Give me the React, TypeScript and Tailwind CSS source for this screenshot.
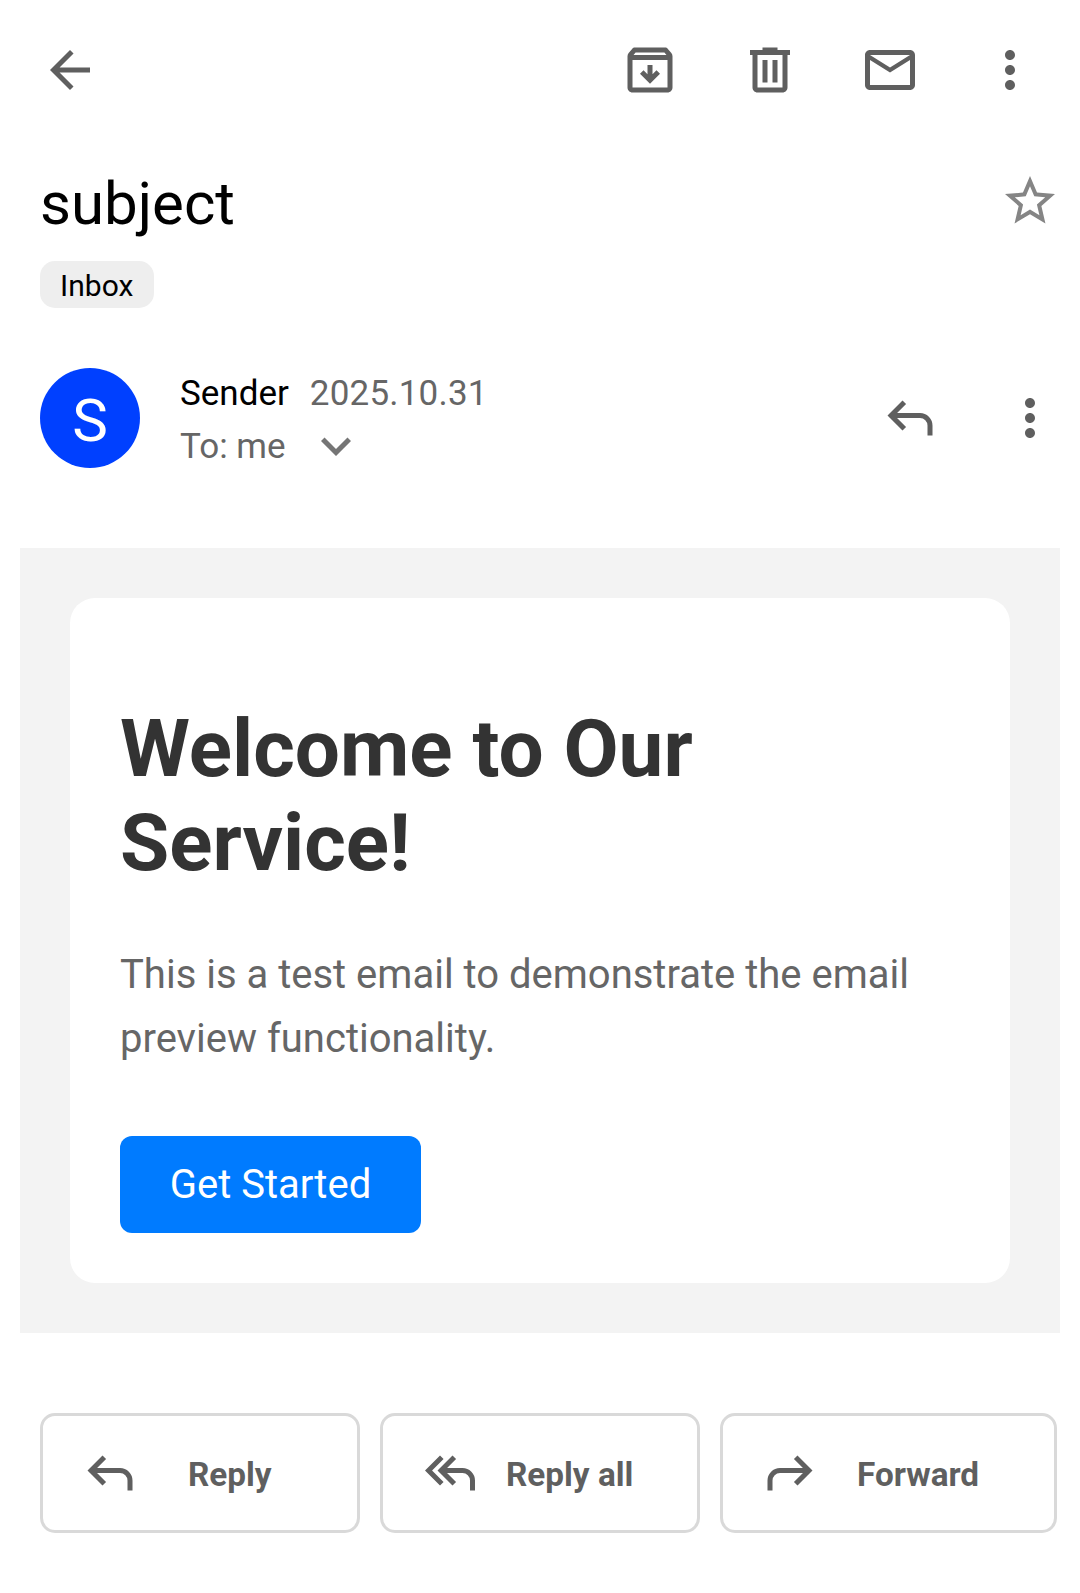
import type { ReactNode } from "react";

const paths = {
  back: "M20 11H7.83l5.59-5.59L12 4l-8 8 8 8 1.41-1.41L7.83 13H20v-2z",
  archive:
    "M20.54 5.23l-1.39-1.68C18.88 3.21 18.47 3 18 3H6c-.47 0-.88.21-1.16.55L3.46 5.23C3.17 5.57 3 6.02 3 6.5V19c0 1.1.9 2 2 2h14c1.1 0 2-.9 2-2V6.5c0-.48-.17-.93-.46-1.27zM6.24 5h11.52l.83 1H5.42l.82-1zM5 19V8h14v11H5zm11-5.5l-4 4-4-4 1.41-1.41L11 13.67V10h2v3.67l1.59-1.59L16 13.5z",
  trash:
    "M15 4V3H9v1H4v2h1v13c0 1.1.9 2 2 2h10c1.1 0 2-.9 2-2V6h1V4h-5zm2 15H7V6h10v13zM9 8h2v9H9zm4 0h2v9h-2z",
  mail: "M22 6c0-1.1-.9-2-2-2H4c-1.1 0-2 .9-2 2v12c0 1.1.9 2 2 2h16c1.1 0 2-.9 2-2V6zm-2 0l-8 5-8-5h16zm0 12H4V8l8 5 8-5v10z",
  more: "M12 8c1.1 0 2-.9 2-2s-.9-2-2-2-2 .9-2 2 .9 2 2 2zm0 2c-1.1 0-2 .9-2 2s.9 2 2 2 2-.9 2-2-.9-2-2-2zm0 6c-1.1 0-2 .9-2 2s.9 2 2 2 2-.9 2-2-.9-2-2-2z",
  star: "M22 9.24l-7.19-.62L12 2 9.19 8.63 2 9.24l5.46 4.73L5.82 21 12 17.27 18.18 21l-1.63-7.03L22 9.24zM12 15.4l-3.76 2.27 1-4.28-3.32-2.88 4.38-.38L12 6.1l1.71 4.04 4.38.38-3.32 2.88 1 4.28L12 15.4z",
  expand: "M16.59 8.59L12 13.17 7.41 8.59 6 10l6 6 6-6z",
  reply:
    "M19 19v-4q0-1.25-.875-2.125T16 12H6.825l3.6 3.6L9 17l-6-6 6-6 1.425 1.4-3.6 3.6H16q2.075 0 3.538 1.463T21 15v4z",
  replyAll:
    "M8 17L2 11l6-6 1.425 1.4L4.825 11l4.6 4.6zM20 19v-4q0-1.25-.875-2.125T17 12h-6.175l3.6 3.6L13 17l-6-6 6-6 1.425 1.4-3.6 3.6H17q2.075 0 3.538 1.463T22 15v4z",
  forward:
    "M5 19v-4q0-1.25.875-2.125T8 12h9.175l-3.6 3.6L15 17l6-6-6-6-1.425 1.4 3.6 3.6H8q-2.075 0-3.538 1.463T3 15v4z",
};

function Icon({ name, className = "" }: { name: keyof typeof paths; className?: string }) {
  return (
    <svg viewBox="0 0 24 24" className={`block size-[60px] shrink-0 fill-current ${className}`} aria-hidden="true">
      <path d={paths[name]} />
    </svg>
  );
}

function IconButton({ label, children }: { label: string; children: ReactNode }) {
  return (
    <button type="button" aria-label={label} className="shrink-0">
      {children}
    </button>
  );
}

function ActionButton({ icon, label, className }: { icon: keyof typeof paths; label: string; className: string }) {
  return (
    <button
      type="button"
      className={`flex h-[120px] items-center rounded-[15px] border-[3px] border-[#d9d9d9] pl-[37px] text-[33.3px] leading-[40px] font-bold ${className}`}
    >
      <Icon name={icon} />
      <span className="pt-[4px] whitespace-nowrap">{label}</span>
    </button>
  );
}

export default function App() {
  return (
    <div className="h-[1593px] w-[1080px] overflow-hidden bg-white font-['Roboto',sans-serif] text-[#5f5f5f]">
      <header className="flex h-[140px] items-center justify-between px-10">
        <IconButton label="Back">
          <Icon name="back" />
        </IconButton>
        <div className="flex gap-[60px]">
          <IconButton label="Archive">
            <Icon name="archive" />
          </IconButton>
          <IconButton label="Delete">
            <Icon name="trash" />
          </IconButton>
          <IconButton label="Mark unread">
            <Icon name="mail" />
          </IconButton>
          <IconButton label="More">
            <Icon name="more" />
          </IconButton>
        </div>
      </header>

      <section className="flex h-[168px] items-start justify-between pt-[29px] pr-5 pl-10">
        <div>
          <h1 className="text-[60px] leading-[70px] text-black">subject</h1>
          <span className="mt-[22px] flex h-[47px] w-[113.5px] items-center justify-center rounded-[15px] bg-[#eeeeee] pt-px text-[30px] leading-[35px] text-black">
            Inbox
          </span>
        </div>
        <div className="pt-[2px] text-[#858585]">
          <IconButton label="Star">
            <Icon name="star" />
          </IconButton>
        </div>
      </section>

      <section className="mt-[60px] flex h-[100px] items-center pr-5 pl-10">
        <div className="flex size-[100px] shrink-0 items-center justify-center rounded-full bg-[#0040ff] pt-[6px] text-[60px] leading-[70px] text-white">
          S
        </div>
        <div className="ml-10 flex-1 pt-[3px] text-[35px] leading-[41px] text-[#666666]">
          <div className="flex gap-[21px]">
            <span className="text-black">Sender</span>
            <span className="tracking-[0.2px]">2025.10.31</span>
          </div>
          <div className="mt-3 flex h-[41px] items-center gap-5">
            <span>To: me</span>
            <Icon name="expand" className="text-[#757575]" />
          </div>
        </div>
        <div className="flex gap-[60px]">
          <IconButton label="Reply to sender">
            <Icon name="reply" />
          </IconButton>
          <IconButton label="Message options">
            <Icon name="more" />
          </IconButton>
        </div>
      </section>

      <main className="mx-5 mt-20 h-[785px] bg-[#f3f3f3] p-[50px]">
        <article className="h-[685px] rounded-[25px] bg-white px-[50px] pt-[104px]">
          <h2 className="text-[80px] leading-[94px] font-bold text-[#333333]">
            Welcome to Our
            <br />
            Service!
          </h2>
          <p className="mt-[53px] text-[40px] leading-[64px] text-[#666666]">
            This is a test email to demonstrate the email
            <br />
            preview functionality.
          </p>
          <button
            type="button"
            className="mt-[65px] flex h-[97px] w-[301px] items-center justify-center rounded-[12px] bg-[#007bff] text-[40px] leading-[47px] text-white"
          >
            Get Started
          </button>
        </article>
      </main>

      <footer className="mt-20 flex gap-5 pl-10">
        <ActionButton icon="reply" label="Reply" className="w-[320px] gap-[48px]" />
        <ActionButton icon="replyAll" label="Reply all" className="w-[320px] gap-[26px]" />
        <ActionButton icon="forward" label="Forward" className="w-[337px] gap-[37px]" />
      </footer>
    </div>
  );
}
